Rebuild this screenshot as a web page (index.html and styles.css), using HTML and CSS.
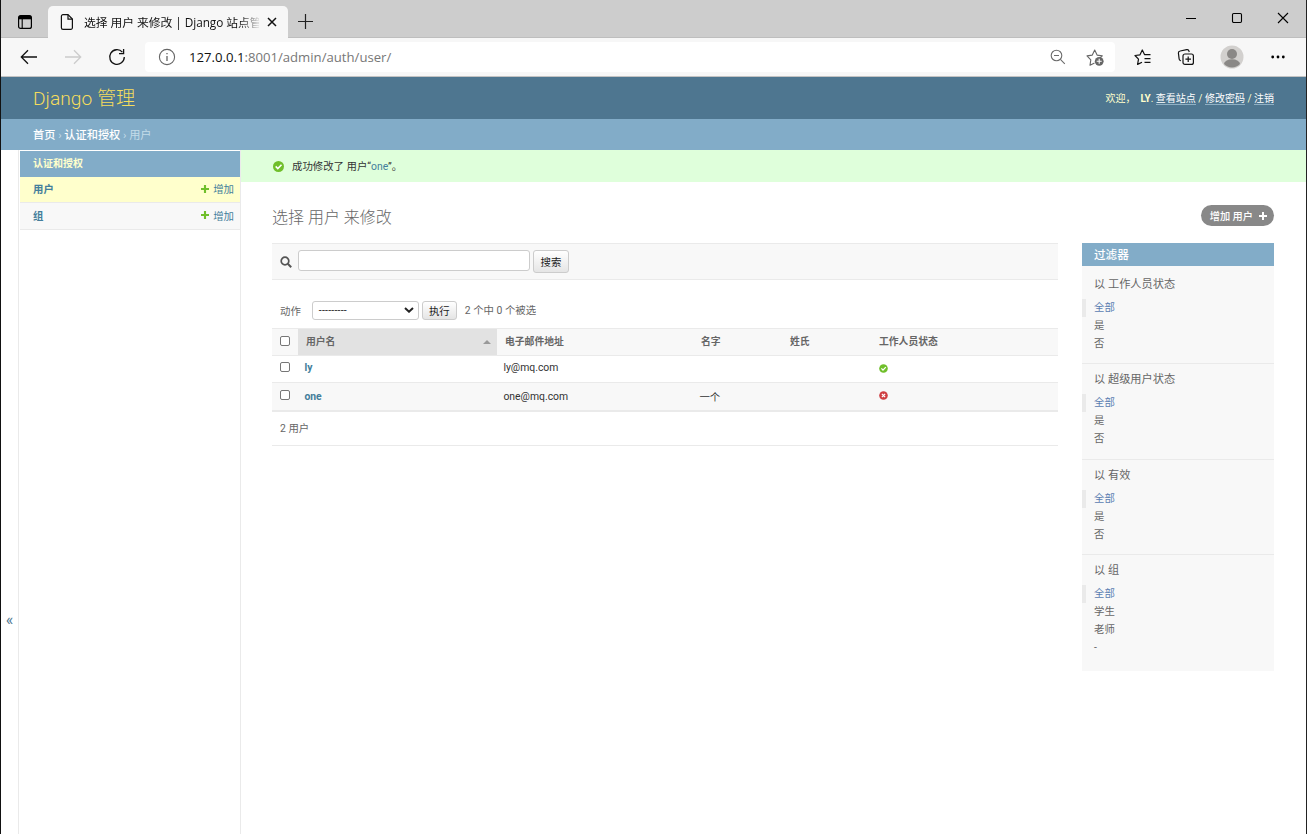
FILE: index.html
```html
<!DOCTYPE html>
<html lang="zh-Hans">
<head>
  <meta charset="UTF-8" />
  <title>选择 用户 来修改 | Django 站点管理员</title>
  <link rel="stylesheet" href="styles.css">
</head>
<body>
  <div class="window">
    <div class="titlebar">
      <svg class="tab-actions" width="16" height="16" viewBox="0 0 16 16" fill="none" stroke="#000"><rect x="1.6" y="1.6" width="12.8" height="12.8" rx="2" stroke-width="1.2"/><path d="M2 3.6h12" stroke-width="3.4"/><path d="M5.2 5v9.4" stroke-width="1.1"/></svg>
      <div class="tab">
        <svg width="14" height="18" viewBox="0 0 14 18" fill="none" stroke="#111" stroke-width="1.2"><path d="M3 1.6h5l4.4 4.5v8.7a1.6 1.6 0 0 1-1.6 1.6H3a1.6 1.6 0 0 1-1.6-1.6V3.2A1.6 1.6 0 0 1 3 1.6z"/><path d="M8 1.8v4.4h4.2"/></svg>
        <span class="tab-title">选择 用户 来修改 | Django 站点管</span>
        <svg class="tab-close" width="10" height="10" viewBox="0 0 10 10" stroke="#111" stroke-width="1.5"><path d="M1 1l8 8M9 1L1 9"/></svg>
      </div>
      <svg class="new-tab" width="15" height="15" viewBox="0 0 15 15" stroke="#222" stroke-width="1.2"><path d="M7.5 0v15M0 7.5h15"/></svg>
      <div class="window-buttons">
        <svg width="12" height="12" viewBox="0 0 12 12" stroke="#000"><path d="M1 6.5h10"/></svg>
        <svg width="12" height="12" viewBox="0 0 12 12" fill="none" stroke="#000" stroke-width="1.1"><rect x="1.5" y="1.5" width="9" height="9" rx="1.2"/></svg>
        <svg width="12" height="12" viewBox="0 0 12 12" stroke="#000" stroke-width="1.1"><path d="M1 1l10 10M11 1L1 11"/></svg>
      </div>
    </div>

    <div class="toolbar">
      <svg class="back" width="18" height="16" viewBox="0 0 18 16" fill="none" stroke="#111" stroke-width="1.3"><path d="M17 8H1.5M8 1.2L1.3 8 8 14.8"/></svg>
      <svg class="forward" width="18" height="16" viewBox="0 0 18 16" fill="none" stroke="#ccc" stroke-width="1.3"><path d="M1 8h15.5M10 1.2L16.7 8 10 14.8"/></svg>
      <svg class="reload" width="18" height="18" viewBox="0 0 18 18" fill="none" stroke="#111" stroke-width="1.3"><path d="M16.3 9A7.3 7.3 0 1 1 14.4 4.1M15.6 1v4.6H11"/></svg>
      <div class="address">
        <svg width="18" height="18" viewBox="0 0 18 18" fill="none" stroke="#666" stroke-width="1.1"><circle cx="9" cy="9" r="7.6"/><path d="M9 8v5M9 5v1.3" stroke-width="1.3"/></svg>
        <span class="url"><b>127.0.0.1</b>:8001/admin/auth/user/</span>
        <svg class="zoom-out" width="16" height="16" viewBox="0 0 16 16" fill="none" stroke="#6d6d6d" stroke-width="1.1"><circle cx="6.5" cy="6.5" r="5.3"/><path d="M10.4 10.4l4.4 4.4M4 6.5h5"/></svg>
        <svg class="star" width="19" height="19" viewBox="0 0 19 19" fill="none" stroke="#666" stroke-width="1.1" stroke-linejoin="round"><path d="M8.5 15.1L4 17.3l.8-5.5L1 7.9l5.3-.8L8.7 2l2.4 5.1 5.2.8-2.4 2.3"/><circle cx="13.2" cy="13.3" r="4.4" fill="#666" stroke="none"/><path d="M13.2 10.8v5M10.7 13.3h5" stroke="#fff"/></svg>
      </div>
      <svg class="favorites" width="18" height="18" viewBox="0 0 18 18" fill="none" stroke="#111" stroke-width="1.2" stroke-linejoin="round"><path d="M8 14.2l-4.4 2.2.9-5.2L1 7.5l5-.7L8.3 2l2.2 4.6h5.2M10.5 10.6h6M10.5 14.4h6M12 6.6h4.5"/></svg>
      <svg class="collections" width="18" height="18" viewBox="0 0 18 18" fill="none" stroke="#111" stroke-width="1.2"><rect x="6" y="6" width="10.4" height="10.4" rx="2"/><path d="M11.2 8.4v5.6M8.4 11.2H14M4 12.8l-.8-.3a2 2 0 0 1-1.1-1.7L1.4 5a2 2 0 0 1 1.8-2l6.5-1.3a2 2 0 0 1 2.3 1.5l.2.8"/></svg>
      <svg class="avatar" width="24" height="24" viewBox="0 0 24 24"><circle cx="12" cy="12" r="11.5" fill="#d2d0ce"/><circle cx="12" cy="9" r="5" fill="#8a8886"/><path d="M4 19a8 4.7 0 0 1 16 0 11 11 0 0 1-16 0z" fill="#8a8886"/></svg>
      <svg class="more" width="14" height="4" viewBox="0 0 14 4"><circle cx="1.7" cy="2" r="1.4"/><circle cx="7" cy="2" r="1.4"/><circle cx="12.3" cy="2" r="1.4"/></svg>
    </div>

    <header class="header">
      <h1>Django 管理</h1>
      <div class="user-tools">欢迎，&nbsp; <strong>LY</strong>. <a>查看站点</a> / <a>修改密码</a> / <a>注销</a></div>
    </header>
    <nav class="breadcrumbs"><a>首页</a> › <a>认证和授权</a> › 用户</nav>

    <div class="main">
      <div class="toggle-sidebar">«</div>
      <nav class="sidebar">
        <div class="caption">认证和授权</div>
        <div class="model current"><b>用户</b><svg width="8" height="8" viewBox="0 0 9 9"><path d="M3.3 0h2.4v3.3H9v2.4H5.7V9H3.3V5.7H0V3.3h3.3z" fill="#70bf2b"/></svg><a>增加</a></div>
        <div class="model"><b>组</b><svg width="8" height="8" viewBox="0 0 9 9"><path d="M3.3 0h2.4v3.3H9v2.4H5.7V9H3.3V5.7H0V3.3h3.3z" fill="#70bf2b"/></svg><a>增加</a></div>
      </nav>

      <div class="content">
        <div class="message">
          <svg width="11" height="11" viewBox="0 0 11 11"><circle cx="5.5" cy="5.5" r="5.5" fill="#70bf2b"/><path d="M2.7 5.4l2.1 2.1 3.7-3.8" fill="none" stroke="#fff" stroke-width="1.6"/></svg>
          <span>成功修改了 用户“<a>one</a>”。</span>
        </div>

        <div class="title-row">
          <h2>选择 用户 来修改</h2>
          <a class="add-link">增加 用户 <svg width="8" height="8" viewBox="0 0 8 8"><path d="M4 0v8M0 4h8" stroke="#fff" stroke-width="2"/></svg></a>
        </div>

        <div class="changelist">
          <div class="results-column">
            <div class="search">
              <svg width="12" height="12" viewBox="0 0 12 12" fill="none" stroke="#555"><circle cx="5" cy="5" r="3.8" stroke-width="1.7"/><path d="M7.8 7.8l3.4 3.4" stroke-width="2"/></svg>
              <input type="text">
              <button>搜索</button>
            </div>
            <div class="actions">
              <label>动作</label>
              <div class="select">---------<svg width="10" height="6" viewBox="0 0 10 6"><path d="M1 1l4 3.7L9 1" fill="none" stroke="#222" stroke-width="2"/></svg></div>
              <button>执行</button>
              <span>2 个中 0 个被选</span>
            </div>
            <table>
              <colgroup><col class="c-check"><col class="c-user"><col class="c-mail"><col class="c-name"><col class="c-name"><col></colgroup>
              <thead>
                <tr><th class="check"><i class="box"></i></th><th class="sorted">用户名<i class="arrow"></i></th><th>电子邮件地址</th><th>名字</th><th>姓氏</th><th>工作人员状态</th></tr>
              </thead>
              <tbody>
                <tr><td class="check"><i class="box"></i></td><td><b>ly</b></td><td>ly@mq.com</td><td></td><td></td>
                  <td class="status"><svg width="9" height="9" viewBox="0 0 9 9"><circle cx="4.5" cy="4.5" r="4.3" fill="#70bf2b"/><path d="M2.4 4.4l1.6 1.7 2.8-3" fill="none" stroke="#fff" stroke-width="1.3"/></svg></td></tr>
                <tr class="even"><td class="check"><i class="box"></i></td><td><b>one</b></td><td>one@mq.com</td><td>一个</td><td></td>
                  <td class="status"><svg width="9" height="9" viewBox="0 0 9 9"><circle cx="4.5" cy="4.5" r="4.3" fill="#cf3f43"/><path d="M2.9 2.9l3.2 3.2M6.1 2.9L2.9 6.1" stroke="#fff" stroke-width="1.3"/></svg></td></tr>
              </tbody>
            </table>
            <div class="paginator">2 用户</div>
          </div>

          <aside class="filter">
            <h2>过滤器</h2>
            <section>
              <h3>以 工作人员状态</h3>
              <ul><li class="selected">全部</li><li>是</li><li>否</li></ul>
            </section>
            <section>
              <h3>以 超级用户状态</h3>
              <ul><li class="selected">全部</li><li>是</li><li>否</li></ul>
            </section>
            <section>
              <h3>以 有效</h3>
              <ul><li class="selected">全部</li><li>是</li><li>否</li></ul>
            </section>
            <section>
              <h3>以 组</h3>
              <ul><li class="selected">全部</li><li>学生</li><li>老师</li><li>-</li></ul>
            </section>
          </aside>
        </div>
      </div>
    </div>
  </div>
</body>
</html>
```
FILE: styles.css
```css
* {
  margin: 0;
  padding: 0;
  box-sizing: border-box;
}

body {
  font-family: Roboto, "Noto Sans CJK SC", sans-serif;
  font-size: 10.4px;
  color: #333;
  background: #fff;
  overflow: hidden;
}

svg {
  display: block;
  flex: none;
}

.window {
  height: 834px;
  display: flex;
  flex-direction: column;
  border-left: 1px solid #111;
  border-right: 1px solid #222;
}

/* Browser chrome */
.titlebar {
  height: 38px;
  background: #cdcdcd;
  display: flex;
  align-items: center;
  padding: 0 17px 0 16px;
  border-bottom: 1px solid #bebebe;
}

.tab-actions {
  margin-top: 6px;
}

.tab {
  width: 240px;
  height: 32px;
  margin: 6px 0 -1px 15px;
  padding: 0 12px;
  display: flex;
  align-items: center;
  background: #f7f7f7;
  border-radius: 5px 5px 0 0;
}

.tab-title {
  width: 175px;
  margin-left: 10px;
  white-space: nowrap;
  font: 11.8px/20px "Open Sans", "Noto Sans CJK SC", sans-serif;
  letter-spacing: -0.05px;
  color: #111;
  -webkit-mask-image: linear-gradient(to right, #000 156px, transparent 177px);
  mask-image: linear-gradient(to right, #000 156px, transparent 177px);
}

.tab-close {
  margin-left: 8px;
}

.new-tab {
  margin: 6px 0 0 10px;
}

.window-buttons {
  margin: -1px 0 0 auto;
  display: flex;
  gap: 34px;
}

.toolbar {
  height: 39px;
  flex: none;
  background: #f7f7f7;
  border-bottom: 1px solid #c3c3c3;
  display: flex;
  align-items: center;
  padding-left: 19px;
}

.forward {
  margin-left: 26px;
}

.reload {
  margin-left: 26px;
}

.address {
  width: 970px;
  height: 30px;
  margin-left: 19px;
  padding: 0 10px 0 13px;
  border-radius: 4px;
  background: #fff;
  display: flex;
  align-items: center;
}

.url {
  margin-left: 13px;
  font: 13.15px/20px "Open Sans", sans-serif;
  color: #777;
}

.url b {
  font-weight: 400;
  color: #111;
}

.zoom-out {
  margin-left: auto;
}

.star {
  margin-left: 20px;
}

.favorites {
  margin-left: 19px;
}

.collections {
  margin-left: 25px;
}

.avatar {
  margin-left: 25px;
}

.more {
  margin-left: 27px;
}

/* Admin header */
.header {
  height: 42px;
  flex: none;
  background: #4e7690;
  padding: 0 32px 2px;
  display: flex;
  align-items: center;
  justify-content: space-between;
  color: #ffc;
}

.header h1 {
  font-size: 19.2px;
  font-weight: 300;
  color: #f5dd5d;
}

.user-tools {
  font-size: 10px;
  white-space: nowrap;
}

.user-tools a {
  color: #fff;
  border-bottom: 1px solid #8fb0c4;
}

.breadcrumbs {
  height: 31px;
  flex: none;
  background: #82acc8;
  padding: 0 32px;
  line-height: 34px;
  font-size: 11.2px;
  color: #c4dce8;
}

.breadcrumbs a {
  color: #fff;
  font-weight: 500;
}

.main {
  flex: 1;
  display: flex;
}

.toggle-sidebar {
  width: 18px;
  border-right: 1px solid #eaeaea;
  display: flex;
  align-items: center;
  justify-content: center;
  padding-top: 255px;
  font-size: 16px;
  color: #4e7690;
}

.sidebar {
  width: 222px;
  border-right: 1px solid #eaeaea;
  padding: 1px 0 0 1px;
}

.caption {
  height: 26px;
  padding-left: 13px;
  line-height: 25px;
  background: #82acc8;
  color: #ffc;
  font-size: 10px;
  font-weight: 700;
}

.model {
  height: 27px;
  padding: 0 6px 2px 13px;
  display: flex;
  align-items: center;
  background: #f8f8f8;
  border-bottom: 1px solid #eaeaea;
  color: #447e9b;
}

.model.current {
  height: 26px;
  background: #ffffcc;
}

.model svg {
  margin: 0 4px 0 auto;
}

/* Change list */
.content {
  flex: 1;
}

.message {
  height: 32px;
  background: #dfffdb;
  padding: 0 0 2px 32px;
  display: flex;
  align-items: center;
  gap: 8px;
}

.message svg {
  margin-top: 2px;
}

.message a {
  color: #447e9b;
}

.title-row {
  height: 61px;
  padding: 6px 32px 0 31px;
  display: flex;
  align-items: center;
  justify-content: space-between;
}

.title-row h2 {
  font-size: 16px;
  font-weight: 300;
  color: #666;
}

.add-link {
  height: 21px;
  padding: 0 7px 0 9px;
  display: flex;
  align-items: center;
  gap: 6px;
  border-radius: 11px;
  background: #888;
  color: #fff;
  font-size: 10.2px;
  font-weight: 500;
}

.changelist {
  display: flex;
  align-items: flex-start;
  gap: 24px;
  padding: 0 32px 0 31px;
}

.results-column {
  width: 786px;
}

.search {
  height: 37px;
  padding-left: 8px;
  display: flex;
  align-items: center;
  background: #f8f8f8;
  border-top: 1px solid #eaeaea;
  border-bottom: 1px solid #eaeaea;
}

.search input {
  width: 232px;
  height: 21px;
  margin: 0 3px 3px 6px;
  border: 1px solid #ccc;
  border-radius: 3px;
  background: #fff;
}

button {
  height: 19px;
  padding: 0 6px;
  border: 1px solid #ccc;
  border-radius: 3px;
  background: linear-gradient(#fff, #e5e5e5);
  font: 10.4px Roboto, "Noto Sans CJK SC", sans-serif;
  color: #222;
}

.search button {
  height: 23px;
  width: 36px;
}

.actions {
  height: 48px;
  padding: 12px 8px 0;
  display: flex;
  align-items: center;
  color: #666;
}

.select {
  width: 107px;
  height: 19px;
  margin: 0 3px 0 11px;
  padding: 0 4px 0 6px;
  border: 1px solid #ccc;
  border-radius: 3px;
  display: flex;
  align-items: center;
  justify-content: space-between;
  letter-spacing: 0.25px;
  color: #222;
}

.actions button {
  width: 35px;
}

.actions span {
  margin: -2px 0 0 8px;
}

table {
  width: 786px;
  table-layout: fixed;
  border-collapse: separate;
  border-spacing: 0;
}

.c-check {
  width: 26px;
}

.c-user {
  width: 199px;
}

.c-mail {
  width: 196px;
}

.c-name {
  width: 89px;
}

th {
  height: 28px;
  padding: 0 8px 2px;
  background: #f8f8f8;
  border-top: 1px solid #eaeaea;
  border-bottom: 1px solid #eaeaea;
  font-size: 9.8px;
  font-weight: 700;
  text-align: left;
  color: #666;
}

td {
  height: 27px;
  padding: 0 6.4px 3px;
  border-bottom: 1px solid #eaeaea;
}

td b {
  color: #447e9b;
}

.even td {
  height: 29px;
  padding-bottom: 1px;
  background: #f8f8f8;
  border-bottom-width: 2px;
}

th.check,
td.check {
  padding: 0 8px 3px;
}

td.check {
  padding-bottom: 4px;
}

.even td.check {
  padding-bottom: 3px;
}

th.sorted {
  background: #e2e2e2;
}

.arrow {
  float: right;
  margin: 6px -2px 0 0;
  border: 4px solid transparent;
  border-top: 0;
  border-bottom: 4px solid #999;
}

.box {
  display: block;
  width: 10px;
  height: 10px;
  border: 1px solid #767676;
  border-radius: 2px;
  background: #fff;
}

td.status {
  padding: 0 8px 2px;
}

.paginator {
  height: 34px;
  padding-left: 8px;
  line-height: 33px;
  border-bottom: 1px solid #eaeaea;
  color: #666;
}

/* Filters */
.filter {
  width: 192px;
  background: #f8f8f8;
  color: #666;
}

.filter h2 {
  height: 23px;
  padding-left: 12px;
  line-height: 25px;
  background: #82acc8;
  color: #fff;
  font-size: 11.6px;
  font-weight: 500;
}

.filter section {
  padding-bottom: 10.5px;
  border-bottom: 1px solid #eaeaea;
}

.filter h2 + section {
  padding-top: 2.5px;
}

.filter section:last-child {
  padding-bottom: 14px;
  border: 0;
}

.filter h3 {
  height: 30px;
  padding-left: 12px;
  line-height: 32px;
  font-size: 11.2px;
  font-weight: 400;
}

.filter ul {
  list-style: none;
}

.filter li {
  height: 18px;
  padding-left: 12px;
  line-height: 17px;
}

.filter .selected {
  padding-left: 8px;
  border-left: 4px solid #eaeaea;
  color: #5b80b2;
}
```
